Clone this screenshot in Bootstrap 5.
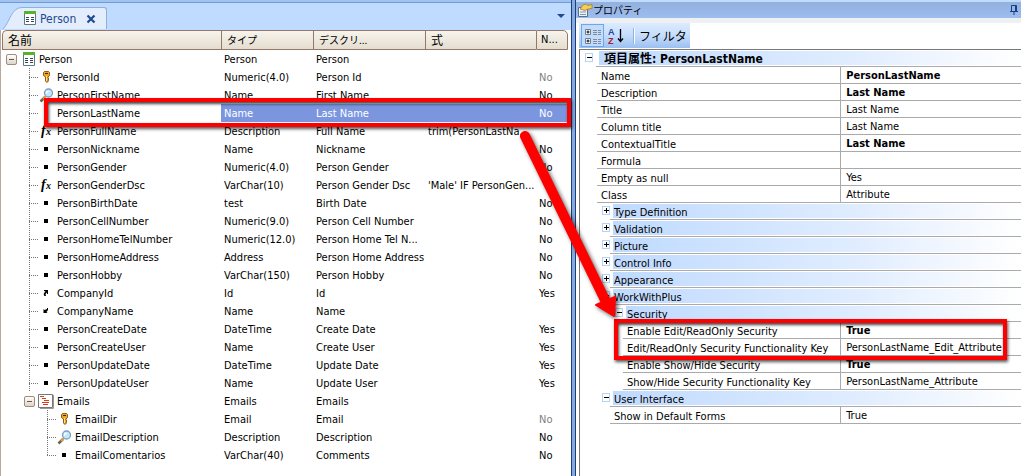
<!DOCTYPE html>
<html lang="ja">
<head>
<meta charset="utf-8">
<meta name="viewport" content="width=device-width, initial-scale=1">
<title>Person</title>
<link href="https://cdn.jsdelivr.net/npm/bootstrap@5.3.0/dist/css/bootstrap.min.css" rel="stylesheet">
<style>
body{font-family:"DejaVu Sans Condensed","DejaVu Sans","Noto Sans CJK JP",sans-serif;font-size:11px;line-height:16px;color:#000;background:#fff;overflow-x:hidden}
button{font:inherit;color:inherit;background:none;border:0;padding:0}
.jp{font-family:"Noto Sans CJK JP",sans-serif;font-size:12px}
.kana{font-family:"Noto Sans CJK JP",sans-serif;font-size:10px}
/* panes */
.editor-pane{flex:571 1 0;min-width:0}
.props-pane{flex:445 1 0;min-width:0}
.splitter{width:5px;background:#84abe0;border-left:1px solid #1f3f7c;border-right:1px solid #1f3f7c;position:relative;flex:none}
/* document tab bar */
.tabbar{height:30px;background:#bfdbff;border-top:2px solid #a3c3ef;box-shadow:inset 0 1px #6d9bdb;padding-right:6px}
.doc-tab{height:22px;color:#1e4a92;font-size:12px}
.doc-tab .slope{width:22px;height:22px;flex:none}
.doc-tab .face{height:22px;background:#e3edfb;border:1px solid #8db0e3;border-width:1px 1px 0 0;border-radius:0 3px 0 0;padding-right:10px}
.doc-tab .shut{margin-left:10px}
.grid-area{border-left:1px solid #bba79c;padding:0 3px 0 1px}
/* attribute grid */
.tree-grid{table-layout:fixed;color:#000;border-collapse:separate;border-spacing:0}
.tree-grid.table>:not(caption)>*>*{padding:1px 0 0 3px;height:18px;line-height:17px;white-space:nowrap;vertical-align:middle}
.tree-grid.table>tbody>tr>td:first-child{padding:0}
.tree-grid.table>thead>tr>th{height:20px;line-height:18px;padding:0 0 0 5px;font-weight:400;background:linear-gradient(#f7f4ed,#e5ddcf);border:solid #93786a;border-width:1px 0 1px 1px}
.tree-grid th:first-child{border-top-left-radius:5px}
.tree-grid.table>thead>tr>th:last-child{border-right-width:1px;border-top-right-radius:5px;padding-left:4px}
.c-type{width:92px}.c-desc{width:112px}.c-form{width:111px}.c-null{width:32px}
.tree-grid.table>tbody>tr.picked>td:not(:first-child){background:#7b96df;color:#fff}
.tree-grid.table>tbody>tr>td.dim{color:#808080}
.picked,.marked{position:relative}
.callout-box{position:absolute;border:4px solid #f00;box-shadow:1px 2px 3px #000a,inset 1px 2px 3px #000b;pointer-events:none;z-index:3}
.picked .callout-box{left:42px;right:-3px;top:-6px;bottom:-5px}
.marked .callout-box{left:34px;right:14px;top:-3px;height:41px}
.node{display:flex;align-items:center;height:18px;padding-top:1px}
.node::before{content:"";width:27px;flex:none}
.node.deep::before{width:45px}
.node.root::before{width:4px}
.node.branch::before{width:22px}
.guide{width:10px;height:18px;margin-top:-1px;flex:none;background:linear-gradient(90deg,#777 50%,#0000 50%) 0 9px/2px 1px repeat-x,linear-gradient(#777 50%,#0000 50%) 0 0/1px 2px repeat-y}
.guide.end{clip-path:inset(0 0 8px 0)}
.fold{width:11px;height:11px;flex:none;border:1px solid #a08a78;border-radius:2px;background:linear-gradient(#fff,#dcd5c8);display:flex;align-items:center;justify-content:center}
.fold::before{content:"";width:5px;height:1px;background:#6b5546}
.ico{width:16px;height:16px;flex:none;margin:-1px 2px 0 0}
.node.root .ico{margin:-1px 2px 0 4px}
.node.branch .ico{margin:-1px 3px 0 3px}
/* property pane */
.props-title{height:18px;border-top:2px solid #bfdbff;background:linear-gradient(#93b1dc,#9dbcf0);padding:0 3px 0 1px;line-height:14px}
.props-bar{height:31px;border-top:5px solid #eff0f2;padding-left:3px}
.tools{width:111px;height:25px;background:linear-gradient(#dcebff,#c5ddfb 50%,#9cc0f1);padding-left:2px}
.tools .on{width:23px;height:23px;border:1px solid #6ca6ee;background:#c5dcf8}
.tools .sep{width:1px;height:16px;background:#8fb2e0;border-right:1px solid #fff;box-sizing:content-box}
.props-body{border-top:1px solid #777;border-left:1px solid #777;margin-left:3px}
.prop-grid{table-layout:fixed;color:#000;border-collapse:separate;border-spacing:0}
.prop-grid.table>:not(caption)>*>*{padding:0;height:17px;line-height:16px;white-space:nowrap}
.prop-grid .c-name{width:59%}
.prop-grid.table>tbody>tr>td.val{border-left:1px solid #aaa;border-bottom:1px solid #aaa;padding:2px 0 0 5px;line-height:14px}
.rule{height:17px;border-bottom:1px solid #aaa;padding:2px 0 0 4px;line-height:15px;margin-left:17px}
.rule.l1{margin-left:30px}
.rule.l2{margin-left:43px}
.group-row{display:flex;height:17px;padding-left:22px}
.group-row.l2{padding-left:35px}
.group-row.top{padding-left:5px}
.group-row .strip{flex:1;border-bottom:1px solid #aaa;padding:1px 0 1px 3px}
.group-row .band{height:14px;line-height:17px;background:linear-gradient(90deg,#bfdaff,#e0edff 60%,#fff);padding-left:1px}
.group-row.top .strip{margin-left:3px}
.group-row.top .band{padding-left:5px;font-weight:700;font-size:12px;line-height:16px}
.plus{width:8px;height:9px;margin-top:3px;border:1px solid #b5d2f7;background:linear-gradient(#000,#000) 50% 50%/5px 1px no-repeat #fff;flex:none}
.plus.more{background:linear-gradient(#000,#000) 50% 50%/5px 1px no-repeat,linear-gradient(#000,#000) 50% 50%/1px 5px no-repeat #fff}
.arrow-mark{position:absolute;left:-61px;top:120px;z-index:4;pointer-events:none;filter:drop-shadow(2px 2px 2px #0009)}
</style>
<script src="https://cdn.jsdelivr.net/npm/bootstrap@5.3.0/dist/js/bootstrap.bundle.min.js"></script>
</head>
<body>
<svg width="0" height="0" class="position-absolute" aria-hidden="true">
<defs>
<symbol id="i-form" viewBox="0 0 16 16"><path d="M2.500 2.500h11v12h-11z" fill="#fff" stroke="#5b7a86"/><path d="M2 1h12v3H2z" fill="#58b32c"/><path d="M4 7h3v1H4zM9 7h3v1H9zM4 9h3v1H4zM9 9h3v1H9zM4 11h3v1H4zM9 11h3v1H9z" fill="#345"/></symbol>
<symbol id="i-key" viewBox="0 0 16 16"><path d="M4.500 3.500l1-1h4l1 1v3l-1.500 1.500v1l1 1-1 1 .5 1-1.500 1.500L6.500 12V8L4.500 6.500z" fill="#f3a51c" stroke="#6b4008" stroke-width=".8"/><path d="M6 4h3v1H6z" fill="#3f2503"/><path d="M7.500 7v5" stroke="#ffe48a"/></symbol>
<symbol id="i-glass" viewBox="0 0 16 16"><path d="M6 10l-4.500 4.500" stroke="#6b6257" stroke-width="2.500"/><path d="M7 9l-3 3" stroke="#e59a3d" stroke-width="2"/><circle cx="9.500" cy="6" r="4" fill="#bfe8fa" stroke="#7f9cc4" stroke-width="1.300"/><path d="M7.500 6.500q0-2 2-2.500" stroke="#fff" stroke-width="1.400" fill="none"/></symbol>
<symbol id="i-dot" viewBox="0 0 16 16"><path d="M5 6h4v4H5z"/></symbol>
<symbol id="i-fx" viewBox="0 0 16 16"><text x="2" y="12" font-family="Liberation Serif,serif" font-style="italic" font-weight="700" font-size="14">f</text><text x="7" y="12" font-family="Liberation Serif,serif" font-style="italic" font-weight="700" font-size="10">x</text></symbol>
<symbol id="i-out" viewBox="0 0 16 16"><path d="M5 5h4v4H8V7.500L6.500 9 7 11H5.500Q3.500 9 6.500 6.500L5 6z"/></symbol>
<symbol id="i-in" viewBox="0 0 16 16"><path d="M8 5h1v2L7.500 9l1 1H4.500V6l1 1L8 6z"/></symbol>
<symbol id="i-level" viewBox="0 0 16 16"><path d="M2 15.500h13.500V2" stroke="#999" fill="none"/><path d="M.500 1.500h14v13H.500z" fill="#fff" stroke="#777"/><path d="M2 3.500h4M4 5.500h4M6 7.500h5M4 9.500h7M5 11.500h5" stroke="#e33819" stroke-width="1.200"/></symbol>
</defs>
</svg>
<main class="d-flex min-vh-100">
<section class="editor-pane d-flex flex-column">
<div class="tabbar d-flex align-items-end justify-content-between">
<div class="doc-tab d-flex align-self-center mt-1">
<svg class="slope" viewBox="0 0 22 22"><path d="M3 22C10 15 11 .5 22 .5V22z" fill="#e3edfb"/><path d="M3 22C10 15 11 .5 22 .5" fill="none" stroke="#8db0e3"/></svg>
<div class="face d-flex align-items-center"><svg class="ico" aria-hidden="true"><use href="#i-form"/></svg><span>Person</span>
<button type="button" class="shut d-flex" aria-label="閉じる"><svg width="10" height="10"><path d="M1.500 1.500l7 7M8.500 1.500l-7 7" stroke="#1e4a92" stroke-width="2.200"/></svg></button></div>
</div>
<button type="button" class="align-self-center d-flex" aria-label="タブ一覧"><svg width="8" height="5"><path d="M0 0h8L4 4z" fill="#1e4a92"/></svg></button>
</div>
<div class="grid-area flex-fill">
<table class="table table-borderless mb-0 tree-grid">
<colgroup><col><col class="c-type"><col class="c-desc"><col class="c-form"><col class="c-null"></colgroup>
<thead><tr><th scope="col" class="jp">名前</th><th scope="col" class="kana">タイプ</th><th scope="col" class="kana">デスクリ...</th><th scope="col" class="jp">式</th><th scope="col">N...</th></tr></thead>
<tbody>
<tr><td><div class="node root"><button type="button" class="fold" aria-label="Person"></button><svg class="ico"><use href="#i-form"/></svg>Person</div></td><td>Person</td><td>Person</td><td></td><td></td></tr>
<tr><td><div class="node"><span class="guide"></span><svg class="ico"><use href="#i-key"/></svg>PersonId</div></td><td>Numeric(4.0)</td><td>Person Id</td><td></td><td class="dim">No</td></tr>
<tr><td><div class="node"><span class="guide"></span><svg class="ico"><use href="#i-glass"/></svg>PersonFirstName</div></td><td>Name</td><td>First Name</td><td></td><td>No</td></tr>
<tr class="picked"><td><div class="node"><span class="guide"></span><svg class="ico"><use href="#i-dot"/></svg>PersonLastName</div><span class="callout-box"></span></td><td>Name</td><td>Last Name</td><td></td><td>No</td></tr>
<tr><td><div class="node"><span class="guide"></span><svg class="ico"><use href="#i-fx"/></svg>PersonFullName</div></td><td>Description</td><td>Full Name</td><td>trim(PersonLastNa...</td><td></td></tr>
<tr><td><div class="node"><span class="guide"></span><svg class="ico"><use href="#i-dot"/></svg>PersonNickname</div></td><td>Name</td><td>Nickname</td><td></td><td>No</td></tr>
<tr><td><div class="node"><span class="guide"></span><svg class="ico"><use href="#i-dot"/></svg>PersonGender</div></td><td>Numeric(4.0)</td><td>Person Gender</td><td></td><td>No</td></tr>
<tr><td><div class="node"><span class="guide"></span><svg class="ico"><use href="#i-fx"/></svg>PersonGenderDsc</div></td><td>VarChar(10)</td><td>Person Gender Dsc</td><td>'Male' IF PersonGen...</td><td></td></tr>
<tr><td><div class="node"><span class="guide"></span><svg class="ico"><use href="#i-dot"/></svg>PersonBirthDate</div></td><td>test</td><td>Birth Date</td><td></td><td>No</td></tr>
<tr><td><div class="node"><span class="guide"></span><svg class="ico"><use href="#i-dot"/></svg>PersonCellNumber</div></td><td>Numeric(9.0)</td><td>Person Cell Number</td><td></td><td>No</td></tr>
<tr><td><div class="node"><span class="guide"></span><svg class="ico"><use href="#i-dot"/></svg>PersonHomeTelNumber</div></td><td>Numeric(12.0)</td><td>Person Home Tel N...</td><td></td><td>No</td></tr>
<tr><td><div class="node"><span class="guide"></span><svg class="ico"><use href="#i-dot"/></svg>PersonHomeAddress</div></td><td>Address</td><td>Person Home Address</td><td></td><td>No</td></tr>
<tr><td><div class="node"><span class="guide"></span><svg class="ico"><use href="#i-dot"/></svg>PersonHobby</div></td><td>VarChar(150)</td><td>Person Hobby</td><td></td><td>No</td></tr>
<tr><td><div class="node"><span class="guide"></span><svg class="ico"><use href="#i-out"/></svg>CompanyId</div></td><td>Id</td><td>Id</td><td></td><td>Yes</td></tr>
<tr><td><div class="node"><span class="guide"></span><svg class="ico"><use href="#i-in"/></svg>CompanyName</div></td><td>Name</td><td>Name</td><td></td><td></td></tr>
<tr><td><div class="node"><span class="guide"></span><svg class="ico"><use href="#i-dot"/></svg>PersonCreateDate</div></td><td>DateTime</td><td>Create Date</td><td></td><td>Yes</td></tr>
<tr><td><div class="node"><span class="guide"></span><svg class="ico"><use href="#i-dot"/></svg>PersonCreateUser</div></td><td>Name</td><td>Create User</td><td></td><td>Yes</td></tr>
<tr><td><div class="node"><span class="guide"></span><svg class="ico"><use href="#i-dot"/></svg>PersonUpdateDate</div></td><td>DateTime</td><td>Update Date</td><td></td><td>Yes</td></tr>
<tr><td><div class="node"><span class="guide"></span><svg class="ico"><use href="#i-dot"/></svg>PersonUpdateUser</div></td><td>Name</td><td>Update User</td><td></td><td>Yes</td></tr>
<tr><td><div class="node branch"><button type="button" class="fold" aria-label="Emails"></button><svg class="ico"><use href="#i-level"/></svg>Emails</div></td><td>Emails</td><td>Emails</td><td></td><td></td></tr>
<tr><td><div class="node deep"><span class="guide"></span><svg class="ico"><use href="#i-key"/></svg>EmailDir</div></td><td>Email</td><td>Email</td><td></td><td class="dim">No</td></tr>
<tr><td><div class="node deep"><span class="guide"></span><svg class="ico"><use href="#i-glass"/></svg>EmailDescription</div></td><td>Description</td><td>Description</td><td></td><td>No</td></tr>
<tr><td><div class="node deep"><span class="guide end"></span><svg class="ico"><use href="#i-dot"/></svg>EmailComentarios</div></td><td>VarChar(40)</td><td>Comments</td><td></td><td>No</td></tr>
</tbody>
</table>
</div>
</section>
<div class="splitter"><svg class="arrow-mark" width="120" height="210" aria-hidden="true"><path d="M14 16L96 184" stroke="#f00" stroke-width="10" stroke-linecap="round"/><path d="M103 196L85 185L104 177z" fill="#f00" stroke="#f00" stroke-width="2" stroke-linejoin="round"/></svg></div>
<section class="props-pane d-flex flex-column">
<header class="props-title d-flex align-items-center">
<svg width="16" height="14" aria-hidden="true"><path d="M1.500 4.500h9v9h-9z" fill="#eef3fa" stroke="#5b6d88"/><path d="M3 9h6M3 11.500h6" stroke="#7a95bb"/><path d="M3 6l3-4 3-1 2 1.500 4-1v4l-4 .5-3 1.500z" fill="#f4cf58" stroke="#a67e23" stroke-width=".8"/></svg>
<span class="kana flex-fill">プロパティ</span>
<button type="button" class="d-flex" aria-label="固定"><svg width="8" height="10"><path d="M1.500 6V.500h5V6M0 6.500h8M4 7v3M5.500 1v5" fill="none" stroke="#173f83"/></svg></button>
</header>
<div class="props-bar">
<div class="tools d-flex align-items-center">
<button type="button" class="on d-flex align-items-center justify-content-center" aria-label="項目別"><svg width="20" height="20"><g fill="#fff" stroke="#687fa0"><path d="M2.500 3.500h5v5h-5zM2.500 12.500h5v5h-5z"/></g><path d="M3.500 6h3M5 4.500v3M3.500 15h3M5 13.500v3" stroke="#000"/><path d="M10 4.500h4M10 6.500h4M10 8.500h4M10 13.500h4M10 15.500h4M10 17.500h4M15 4.500h3M15 6.500h3M15 8.500h3M15 13.500h3M15 15.500h3M15 17.500h3" stroke="#7c8ba4"/></svg></button>
<button type="button" class="ms-1 d-flex" aria-label="アルファベット順"><svg width="17" height="20"><text x="0" y="9" font-family="Liberation Sans,sans-serif" font-weight="700" font-size="9" fill="#1d4b9d">A</text><text x="0" y="18" font-family="Liberation Sans,sans-serif" font-weight="700" font-size="9" fill="#a52032">Z</text><path d="M12.500 3v12M10 12.500l2.500 3 2.500-3" fill="none" stroke="#000" stroke-width="1.300"/></svg></button>
<span class="sep ms-2"></span>
<button type="button" class="jp ms-1">フィルタ</button>
</div>
</div>
<div class="props-body flex-fill">
<table class="table table-borderless mb-0 prop-grid">
<colgroup><col class="c-name"><col></colgroup>
<tbody>
<tr><td colspan="2"><div class="group-row top"><button type="button" class="plus" aria-label="閉じる"></button><div class="strip"><div class="band">項目属性: PersonLastName</div></div></div></td></tr>
<tr><td><div class="rule">Name</div></td><td class="val fw-bold">PersonLastName</td></tr>
<tr><td><div class="rule">Description</div></td><td class="val fw-bold">Last Name</td></tr>
<tr><td><div class="rule">Title</div></td><td class="val">Last Name</td></tr>
<tr><td><div class="rule">Column title</div></td><td class="val">Last Name</td></tr>
<tr><td><div class="rule">ContextualTitle</div></td><td class="val fw-bold">Last Name</td></tr>
<tr><td><div class="rule">Formula</div></td><td class="val"></td></tr>
<tr><td><div class="rule">Empty as null</div></td><td class="val">Yes</td></tr>
<tr><td><div class="rule">Class</div></td><td class="val">Attribute</td></tr>
<tr><td colspan="2"><div class="group-row"><button type="button" class="plus more" aria-label="開く"></button><div class="strip"><div class="band">Type Definition</div></div></div></td></tr>
<tr><td colspan="2"><div class="group-row"><button type="button" class="plus more" aria-label="開く"></button><div class="strip"><div class="band">Validation</div></div></div></td></tr>
<tr><td colspan="2"><div class="group-row"><button type="button" class="plus more" aria-label="開く"></button><div class="strip"><div class="band">Picture</div></div></div></td></tr>
<tr><td colspan="2"><div class="group-row"><button type="button" class="plus more" aria-label="開く"></button><div class="strip"><div class="band">Control Info</div></div></div></td></tr>
<tr><td colspan="2"><div class="group-row"><button type="button" class="plus more" aria-label="開く"></button><div class="strip"><div class="band">Appearance</div></div></div></td></tr>
<tr><td colspan="2"><div class="group-row"><button type="button" class="plus" aria-label="閉じる"></button><div class="strip"><div class="band">WorkWithPlus</div></div></div></td></tr>
<tr><td colspan="2"><div class="group-row l2"><button type="button" class="plus" aria-label="閉じる"></button><div class="strip"><div class="band">Security</div></div></div></td></tr>
<tr class="marked"><td><div class="rule l2">Enable Edit/ReadOnly Security</div><span class="callout-box"></span></td><td class="val fw-bold">True</td></tr>
<tr><td><div class="rule l2">Edit/ReadOnly Security Functionality Key</div></td><td class="val">PersonLastName_Edit_Attribute</td></tr>
<tr><td><div class="rule l2">Enable Show/Hide Security</div></td><td class="val fw-bold">True</td></tr>
<tr><td><div class="rule l2">Show/Hide Security Functionality Key</div></td><td class="val">PersonLastName_Attribute</td></tr>
<tr><td colspan="2"><div class="group-row"><button type="button" class="plus" aria-label="閉じる"></button><div class="strip"><div class="band">User Interface</div></div></div></td></tr>
<tr><td><div class="rule l1">Show in Default Forms</div></td><td class="val">True</td></tr>
</tbody>
</table>
</div>
</section>
</main>
</body>
</html>
